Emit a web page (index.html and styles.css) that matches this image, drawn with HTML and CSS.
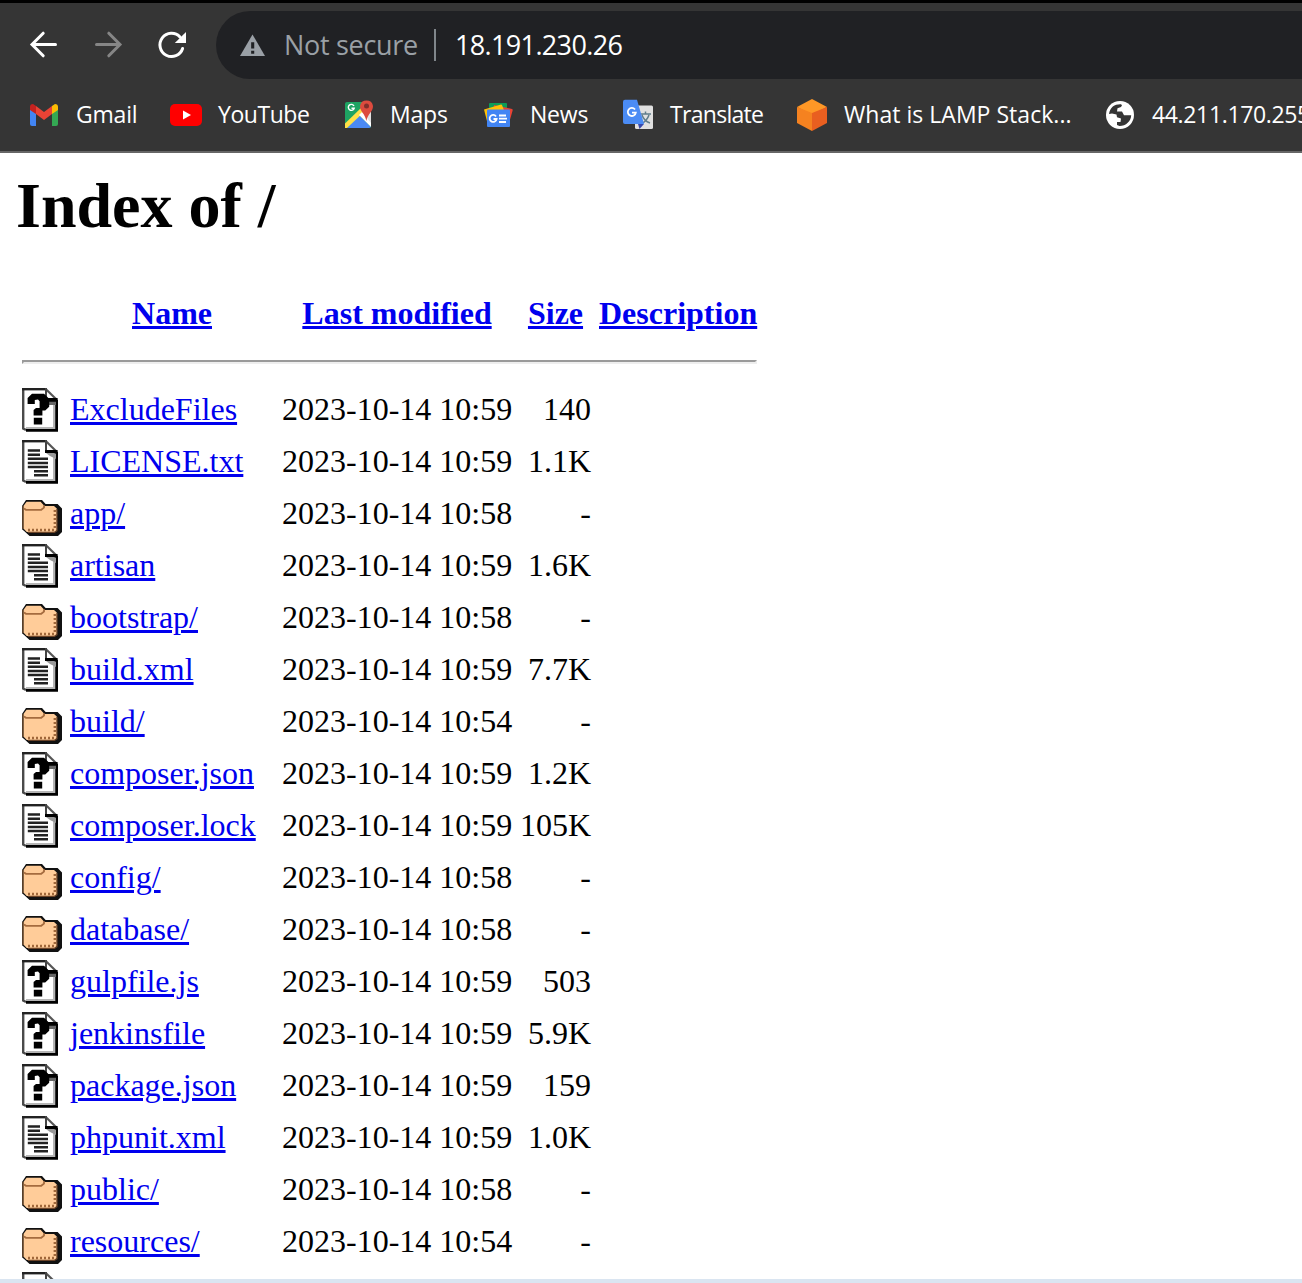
FILE: index.html
```html
<!DOCTYPE html>
<html lang="en">
<head>
<meta charset="utf-8">
<title>Index of /</title>
<link rel="stylesheet" href="styles.css">
</head>
<body>
<svg class="sprites" aria-hidden="true">
  <symbol id="sheet" viewBox="0 0 20 22">
    <path d="M.5 .5H12L17.5 6V21.3H2L.5 20.3Z" fill="#fff"/>
    <path d="M16 8V20H2" fill="none" stroke="#b5b5b5" stroke-width="1"/>
    <path d="M.6 0V20.3L2 21" fill="none" stroke="#4a4a4a" stroke-width="1.2"/>
    <path d="M0 .6H12" stroke="#222" stroke-width="1.2"/>
    <path d="M17.3 6V21.2H2" fill="none" stroke="#000" stroke-width="1.4"/>
    <path d="M12 .6 17.5 6" stroke="#555" stroke-width="1.1"/>
    <path d="M12 0V5.5H17" fill="none" stroke="#444" stroke-width="1"/>
  </symbol>
  <symbol id="unknown" viewBox="0 0 20 22">
    <use href="#sheet" width="20" height="22"/>
    <path d="M12.5 6.5H17V8.5H12.5Z" fill="#666"/>
    <path d="M2.8 8V5L5 2.9H11L13.2 5H17.8V6.9H13.6V9.4L11.6 11.2H10.2V13.7H5.8V11L7 10H8.8V6.6L8 5.8 6.4 6V8ZM5.9 14.9H10.1V18.2H5.9Z" fill="#000"/>
  </symbol>
  <symbol id="text" viewBox="0 0 20 22">
    <use href="#sheet" width="20" height="22"/>
    <path d="M12 6.5H17V9.5L14 8Z" fill="#999"/>
    <path d="M11.5 5H17.8V7.3L16 6.5H11.5Z" fill="#000"/>
    <path d="M2.9 5.3H9M2.9 7.4H9M2.9 9.4H13M2.9 11.5H13M2.9 13.5H13M6 15.6H13M6 17.6H13" stroke="#222" stroke-width="1.25"/>
  </symbol>
  <symbol id="folder" viewBox="0 0 20 22">
    <path d="M0 7 2 4H10L11.8 6H17.8L20 8.2V20L18 22H3.8L1.2 19.6 0 18.6Z" fill="#111"/>
    <path d="M.7 18.3V7L2.3 4.9H9.3L11.2 7H16L17.4 8.2V19L16.2 20H2.4Z" fill="#fc9"/>
    <path d="M.5 18.5V7" stroke="#755335" stroke-width=".7"/>
    <path d="M1 8.2 2 8.9H9.6L11 7.8V6.6" fill="none" stroke="#a56b3e" stroke-width=".9"/>
    <path d="M3 19H16.5M16.4 9V19" fill="none" stroke="#a0673a" stroke-width="1.2" stroke-dasharray="1 1"/>
    <path d="M17.5 8.5V19.3L16.2 20.2H3" fill="none" stroke="#6c4428" stroke-width=".6"/>
  </symbol>
</svg>

<header class="browser">
  <div class="toolbar">
    <svg class="nav back" viewBox="0 0 28 28"><path d="M25.5 13.5H3M13.2 2.2 2 13.5 13.2 24.8"/></svg>
    <svg class="nav forward" viewBox="0 0 28 28"><path d="M2.5 13.5H25M14.8 2.2 26 13.5 14.8 24.8"/></svg>
    <svg class="nav reload" viewBox="0 0 28 28"><path d="M24.6 17.5A11.6 11.6 0 1 1 22 6"/><path class="tip" d="M28 1V12H16.8Z"/></svg>
    <div class="address">
      <svg class="warning" viewBox="0 0 26 23"><path d="M13 0 26 22.5H0Z" fill="#9aa0a6"/><path d="M11.6 8.2H14.8V14.6H11.6ZM11.6 17H14.8V20H11.6Z" fill="#202124"/></svg>
      <span class="insecure">Not secure</span>
      <span class="divider"></span>
      <span class="url">18.191.230.26</span>
    </div>
  </div>
  <nav class="bookmarks">
    <div class="bookmark gmail">
      <svg viewBox="0 0 32 32"><path d="M2 9H8V27H4Q2 27 2 25Z" fill="#4285f4"/><path d="M24 9H30V25Q30 27 28 27H24Z" fill="#34a853"/><path d="M8 7 16 13 24 7V15L16 21 8 15Z" fill="#ea4335"/><path d="M2 11V8Q2 5 5 5L8 7V15Z" fill="#c5221f"/><path d="M30 11V8Q30 5 27 5L24 7V15Z" fill="#fbbc04"/></svg>
      <span>Gmail</span>
    </div>
    <div class="bookmark youtube">
      <svg viewBox="0 0 32 32"><rect y="5" width="32" height="22" rx="5" fill="#f00"/><path d="M13 11.4 21 16 13 20.6Z" fill="#fff"/></svg>
      <span>YouTube</span>
    </div>
    <div class="bookmark maps">
      <svg viewBox="0 0 32 32"><rect x="3" y="3" width="26" height="26" rx="2" fill="#1ea362"/><path d="M29 6V27L18 15Z" fill="#e1e1e1"/><path d="M5 29 17 16 29 28 27 29Z" fill="#4a89f3"/><path d="M3 24.5 19 9 22 13 5 29H3Z" fill="#ffe047"/><path d="M17 16 20 13 29 24V28Z" fill="#fff"/><path d="M31 7A6.6 6.6 0 0 0 18 7C18 13 23 14 24.3 22 26 14 31 13 31 7Z" fill="#dd4b3e"/><circle cx="24.5" cy="7" r="2.5" fill="#822f2b"/><path d="M12 7A3 3 0 1 0 12.2 9.2H9.5" fill="none" stroke="#fff" stroke-width="1.4"/></svg>
      <span>Maps</span>
    </div>
    <div class="bookmark news">
      <svg viewBox="0 0 32 32"><rect x="7" y="4" width="18" height="16" rx="1" fill="#0c9d58"/><path d="M12 6 30 10Q31 10 30.5 12L27 24H10Z" fill="#ea4335"/><path d="M2 10.5 19 5.5Q20 5.5 20 6L26 22 6 26Z" fill="#ffc107"/><rect x="5" y="10.5" width="23" height="17.5" rx="1" fill="#4285f4"/><path d="M14 17.4A3.5 3.5 0 1 0 14.6 20H11.5M17 16.5H24M17 19.7H25M17 23H24" fill="none" stroke="#fff" stroke-width="1.8"/></svg>
      <span>News</span>
    </div>
    <div class="bookmark translate">
      <svg viewBox="0 0 32 32"><rect x="13" y="6.5" width="18" height="23.5" rx="1.5" fill="#e0e0e0"/><path d="M18 15H29M23.5 12.5V15M20 16Q22 22 28 24M27 16Q25 22 19 25" fill="none" stroke="#607d8b" stroke-width="1.5"/><path d="M16 25H22L17.5 30Z" fill="#3949ab"/><path d="M3 .8H15L22 25H3Q1 25 1 23V2.8Q1 .8 3 .8Z" fill="#4b8cf5"/><path d="M13 10.5A4 4 0 1 0 13.8 13.6H10" fill="none" stroke="#fff" stroke-width="1.8"/></svg>
      <span>Translate</span>
    </div>
    <div class="bookmark lamp">
      <svg viewBox="0 0 32 32"><path d="M16 0 31 8 16 16 1 8Z" fill="#ff9826"/><path d="M1 8 16 14V32L1 24Z" fill="#f58220"/><path d="M31 8 16 14V32L31 24Z" fill="#e95f20"/></svg>
      <span>What is LAMP Stack...</span>
    </div>
    <div class="bookmark host">
      <svg viewBox="0 0 32 32"><circle cx="16" cy="16" r="14" fill="#fff"/><path d="M5 15C6 8 11 5 17 5.3L18 6.2 17 8 13.5 9.3 13 12.5H18L20 16.2H27.2C27 22 22 27 15.5 27L13 26V23H16.5L17 19.5 13 18.2 12.5 15.5 8 14.5Z" fill="#353535"/></svg>
      <span>44.211.170.255</span>
    </div>
  </nav>
</header>

<main class="listing">
  <h1>Index of /</h1>
  <table class="files">
    <colgroup><col class="c-icon"><col class="c-name"><col class="c-date"><col class="c-size"><col class="c-desc"></colgroup>
    <thead>
      <tr><th></th><th><a href="#">Name</a></th><th><a href="#">Last modified</a></th><th><a href="#">Size</a></th><th><a href="#">Description</a></th></tr>
      <tr class="rule"><th colspan="5"><hr></th></tr>
    </thead>
    <tbody>
      <tr><td><svg><use href="#unknown"/></svg></td><td><a href="#">ExcludeFiles</a></td><td>2023-10-14 10:59</td><td>140</td><td></td></tr>
      <tr><td><svg><use href="#text"/></svg></td><td><a href="#">LICENSE.txt</a></td><td>2023-10-14 10:59</td><td>1.1K</td><td></td></tr>
      <tr><td><svg><use href="#folder"/></svg></td><td><a href="#">app/</a></td><td>2023-10-14 10:58</td><td>-</td><td></td></tr>
      <tr><td><svg><use href="#text"/></svg></td><td><a href="#">artisan</a></td><td>2023-10-14 10:59</td><td>1.6K</td><td></td></tr>
      <tr><td><svg><use href="#folder"/></svg></td><td><a href="#">bootstrap/</a></td><td>2023-10-14 10:58</td><td>-</td><td></td></tr>
      <tr><td><svg><use href="#text"/></svg></td><td><a href="#">build.xml</a></td><td>2023-10-14 10:59</td><td>7.7K</td><td></td></tr>
      <tr><td><svg><use href="#folder"/></svg></td><td><a href="#">build/</a></td><td>2023-10-14 10:54</td><td>-</td><td></td></tr>
      <tr><td><svg><use href="#unknown"/></svg></td><td><a href="#">composer.json</a></td><td>2023-10-14 10:59</td><td>1.2K</td><td></td></tr>
      <tr><td><svg><use href="#text"/></svg></td><td><a href="#">composer.lock</a></td><td>2023-10-14 10:59</td><td>105K</td><td></td></tr>
      <tr><td><svg><use href="#folder"/></svg></td><td><a href="#">config/</a></td><td>2023-10-14 10:58</td><td>-</td><td></td></tr>
      <tr><td><svg><use href="#folder"/></svg></td><td><a href="#">database/</a></td><td>2023-10-14 10:58</td><td>-</td><td></td></tr>
      <tr><td><svg><use href="#unknown"/></svg></td><td><a href="#">gulpfile.js</a></td><td>2023-10-14 10:59</td><td>503</td><td></td></tr>
      <tr><td><svg><use href="#unknown"/></svg></td><td><a href="#">jenkinsfile</a></td><td>2023-10-14 10:59</td><td>5.9K</td><td></td></tr>
      <tr><td><svg><use href="#unknown"/></svg></td><td><a href="#">package.json</a></td><td>2023-10-14 10:59</td><td>159</td><td></td></tr>
      <tr><td><svg><use href="#text"/></svg></td><td><a href="#">phpunit.xml</a></td><td>2023-10-14 10:59</td><td>1.0K</td><td></td></tr>
      <tr><td><svg><use href="#folder"/></svg></td><td><a href="#">public/</a></td><td>2023-10-14 10:58</td><td>-</td><td></td></tr>
      <tr><td><svg><use href="#folder"/></svg></td><td><a href="#">resources/</a></td><td>2023-10-14 10:54</td><td>-</td><td></td></tr>
      <tr><td><svg><use href="#text"/></svg></td><td></td><td></td><td></td><td></td></tr>
    </tbody>
  </table>
</main>
<footer class="taskbar"></footer>
</body>
</html>
```
FILE: styles.css
```css
* { box-sizing: border-box; }

body {
  margin: 0;
  height: 1283px;
  display: flex;
  flex-direction: column;
  overflow: hidden;
  background: #fff;
  color: #000;
  font: 32px/36px "Liberation Serif", "Times New Roman", serif;
}

.sprites { display: none; }

/* Browser chrome */
.browser {
  flex: none;
  height: 153px;
  border-top: 3px solid #000;
  border-bottom: 2px solid #666;
  background: #353535;
  overflow: hidden;
  font-family: "Open Sans", "Noto Sans", sans-serif;
}

.toolbar {
  display: flex;
  align-items: center;
  height: 68px;
  margin-top: 8px;
  padding-left: 30px;
}

.nav {
  flex: none;
  width: 28px;
  height: 28px;
  margin-right: 36px;
  fill: none;
  stroke: #fff;
  stroke-width: 3;
  stroke-linecap: round;
  overflow: visible;
}
.forward { stroke: #868686; }
.reload { margin-right: 30px; }
.reload .tip { fill: #fff; stroke: none; }

.address {
  flex: 1;
  display: flex;
  align-items: center;
  height: 68px;
  padding-left: 24px;
  border-radius: 34px 0 0 34px;
  background: #202124;
  font-size: 27px;
  white-space: nowrap;
}
.warning { width: 25px; height: 23px; }
.insecure { width: 133px; margin-left: 19px; color: #9aa0a6; letter-spacing: -0.3px; }
.divider { width: 2px; height: 32px; margin: 0 19px 0 17px; background: #80868b; }
.url { color: #fff; letter-spacing: -0.65px; }

.bookmarks {
  display: grid;
  grid-template-columns: 142px 172px 140px 140px 174px 308px 198px;
  height: 72px;
  padding-left: 28px;
  color: #fff;
  font-size: 23px;
}
.bookmark {
  display: flex;
  align-items: center;
  gap: 16px;
  white-space: nowrap;
}
.bookmark svg { flex: none; width: 32px; height: 32px; }
.bookmark span { padding-bottom: 2px; }
.gmail, .news, .maps { letter-spacing: -0.2px; }
.youtube { letter-spacing: -0.45px; }
.translate { letter-spacing: -0.7px; }
.lamp { letter-spacing: 0.03px; }
.host { letter-spacing: -0.35px; }

/* Directory listing */
.listing {
  flex: 1;
  min-height: 0;
  padding: 16px 16px 0;
  overflow: hidden;
}

h1 {
  margin: 0 0 43px;
  font-size: 64px;
  line-height: 74px;
}

.files {
  width: 747px;
  table-layout: fixed;
  border-collapse: separate;
  border-spacing: 4px;
}
.c-icon { width: 44px; }
.c-name { width: 208px; }
.c-date { width: 234px; }
.c-size { width: 75px; }
.c-desc { width: 162px; }

.files tr { height: 48px; }
.files th, .files td {
  padding: 1px 2px 3px;
  vertical-align: middle;
  white-space: nowrap;
}
.files td:first-child, .files .rule th { padding: 2px; }
.files td:nth-child(3), .files td:nth-child(4) { text-align: right; }
.files td svg { display: block; width: 40px; height: 44px; }

.files .rule { height: 40px; }
hr {
  height: 4px;
  margin: 16px 0;
  border: 2px solid;
  border-color: #9a9a9a #eee #eee #9a9a9a;
}

a {
  color: #00e;
  text-decoration: underline;
  text-decoration-thickness: 3px;
  text-underline-offset: 2px;
}

.taskbar { flex: none; height: 4px; background: #dae5f1; }
```
